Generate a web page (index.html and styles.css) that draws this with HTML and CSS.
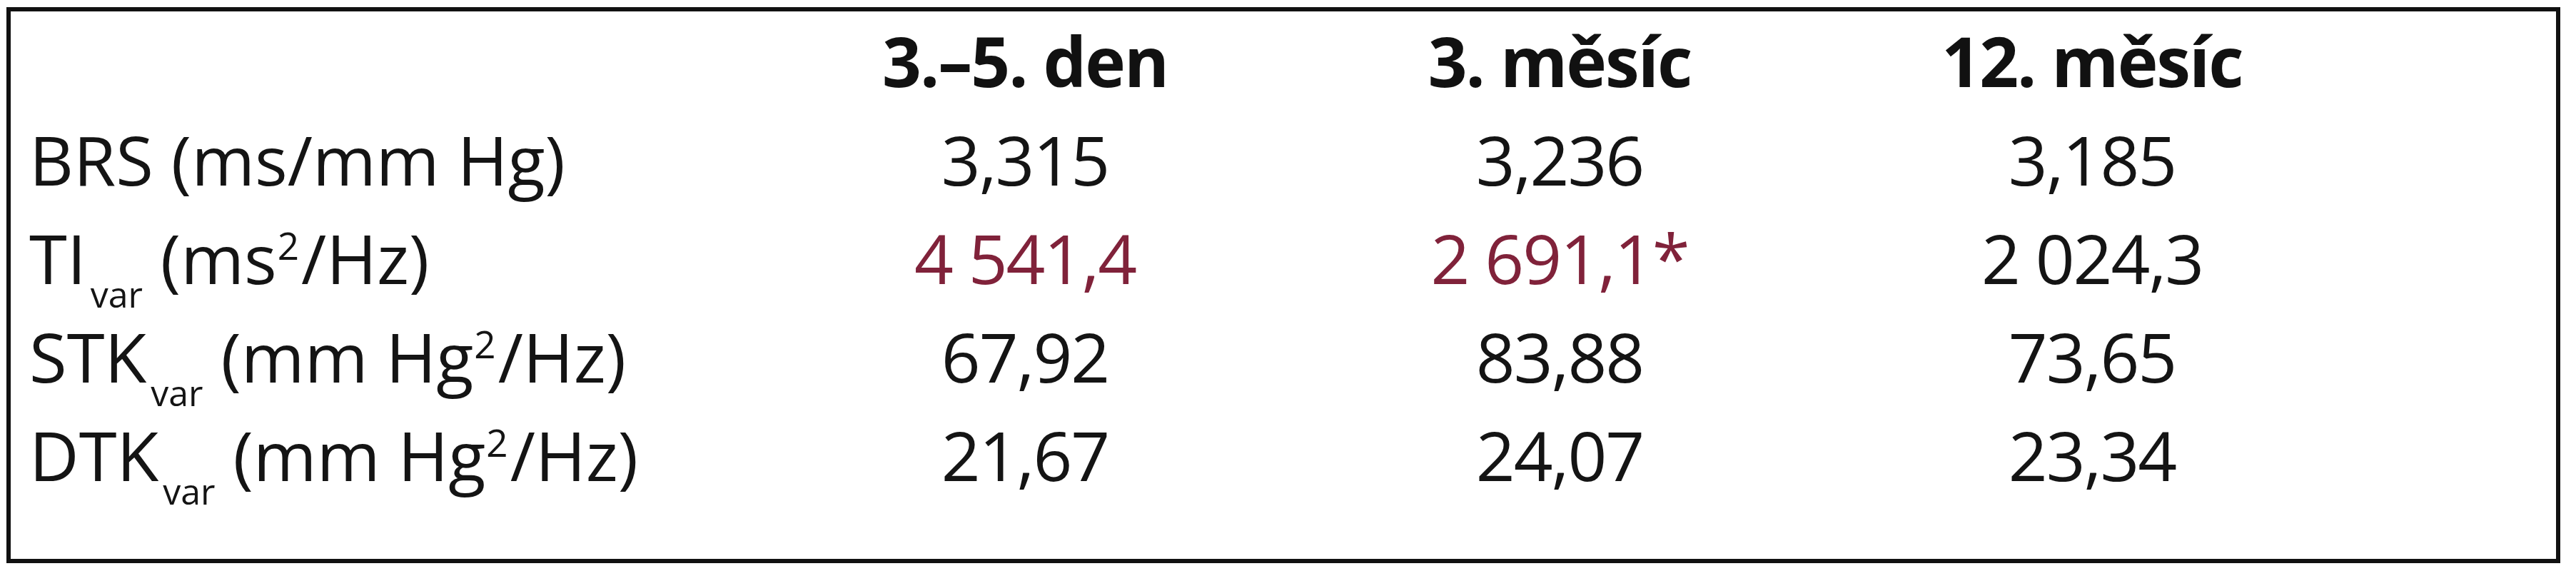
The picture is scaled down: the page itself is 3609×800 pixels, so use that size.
FILE: index.html
```html
<!DOCTYPE html>
<html lang="cs">
<head>
<meta charset="utf-8">
<title>Tabulka</title>
<link rel="stylesheet" href="styles.css">
</head>
<body>
<div class="box">
  <div class="grid">
    <div class="cell label"></div>
    <div class="cell head">3.–5. den</div>
    <div class="cell head">3. měsíc</div>
    <div class="cell head">12. měsíc</div>
    <div class="cell"></div>

    <div class="cell label">BRS (ms/mm Hg)</div>
    <div class="cell val">3,315</div>
    <div class="cell val">3,236</div>
    <div class="cell val">3,185</div>
    <div class="cell"></div>

    <div class="cell label">TI<span class="sub">var</span> (ms<span class="sup">2</span>/Hz)</div>
    <div class="cell val red">4 541,4</div>
    <div class="cell val red">2 691,1*</div>
    <div class="cell val">2 024,3</div>
    <div class="cell"></div>

    <div class="cell label">STK<span class="sub">var</span> (mm Hg<span class="sup">2</span>/Hz)</div>
    <div class="cell val">67,92</div>
    <div class="cell val">83,88</div>
    <div class="cell val">73,65</div>
    <div class="cell"></div>

    <div class="cell label">DTK<span class="sub">var</span> (mm Hg<span class="sup">2</span>/Hz)</div>
    <div class="cell val">21,67</div>
    <div class="cell val">24,07</div>
    <div class="cell val">23,34</div>
    <div class="cell"></div>
  </div>
</div>
</body>
</html>
```
FILE: styles.css
```css
html, body {
  margin: 0;
  padding: 0;
  background: #ffffff;
}

body {
  font-family: "Open Sans", "Noto Sans", "DejaVu Sans", sans-serif;
  color: #141414;
}

.box {
  box-sizing: border-box;
  margin: 10px 0 0 9px;
  width: 3578px;
  height: 779px;
  border: 6px solid #111111;
  padding: 0 0 0 26px;
}

.grid {
  display: grid;
  grid-template-columns: 1020px 750px 748px 744px 1fr;
  grid-auto-rows: 138px;
  font-size: 96px;
  line-height: 138px;
}

.cell {
  white-space: nowrap;
}

.head {
  font-weight: 700;
  text-align: center;
  color: #111111;
  letter-spacing: -2px;
}

.val {
  text-align: center;
  letter-spacing: -2px;
}

.red {
  color: #80223a;
}

.sub {
  font-size: 50px;
  line-height: 0;
  vertical-align: -33px;
  margin-left: 6px;
}

.sup {
  font-size: 53px;
  line-height: 0;
  vertical-align: 34px;
  margin: 0 3px 0 1px;
}
```
